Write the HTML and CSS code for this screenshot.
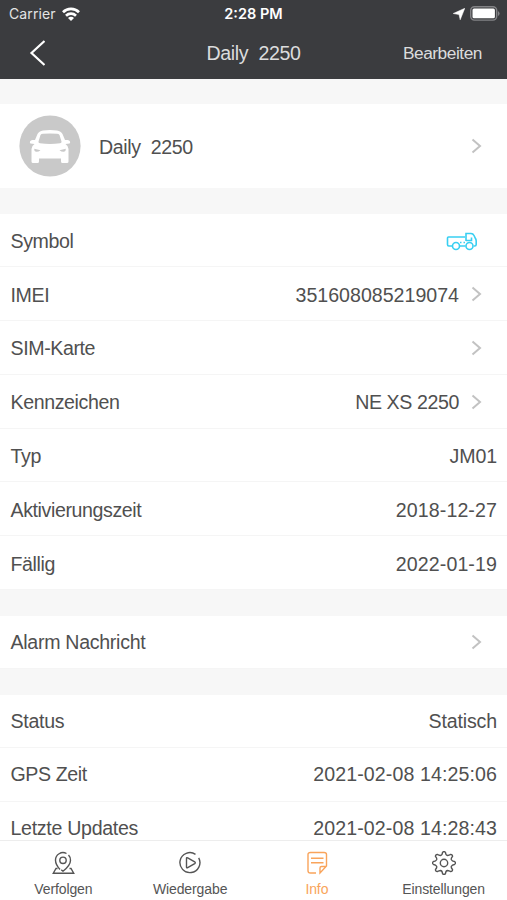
FILE: index.html
```html
<!DOCTYPE html>
<html lang="de">
<head>
    <meta charset="UTF-8">
    <meta name="viewport" content="width=device-width, initial-scale=1.0">
    <title>Daily 2250</title>
    <link rel="stylesheet" href="styles.css">
</head>
<body>
    <svg width="0" height="0" class="defs">
        <symbol id="chevron" viewBox="0 0 11 16">
            <path d="M1.500 1.500 9 8l-7.500 6.500" fill="none" stroke="#c2c2c2" stroke-width="2"/>
        </symbol>
    </svg>

    <header class="header">
        <div class="status-bar">
            <div class="carrier">
                <span>Carrier</span>
                <svg width="18" height="14" viewBox="0 0 18 14" fill="none" stroke="#fff" stroke-width="2.700">
                    <path d="M1 5.200a11.400 11.400 0 0 1 16 0M4 8.700a7.200 7.200 0 0 1 10 0"/>
                    <path d="M9 14 6 11a4.200 4.200 0 0 1 6 0z" fill="#fff" stroke="none"/>
                </svg>
            </div>
            <span class="time">2:28 PM</span>
            <div class="indicators">
                <svg width="12" height="12" viewBox="0 0 12 12"><path d="M11.800.3 7.200 11.800 6 6.600.2 5.500z" fill="#fff" stroke="#fff" stroke-width=".5"/></svg>
                <svg width="30" height="15" viewBox="0 0 30 15">
                    <rect x=".7" y=".7" width="26" height="13.400" rx="3.800" fill="none" stroke="#838386" stroke-width="1.400"/>
                    <rect x="2.500" y="2.500" width="22.400" height="9.800" rx="1.500" fill="#fff"/>
                    <path d="M28 5v5q1.600-1 1.600-2.500T28 5z" fill="#838386"/>
                </svg>
            </div>
        </div>
        <div class="nav-bar">
            <svg class="back" width="18" height="28" viewBox="0 0 18 28"><path d="M17.500 2 4.500 14l13 12" fill="none" stroke="#fff" stroke-width="2.200"/></svg>
            <h1>Daily&nbsp; 2250</h1>
            <span class="edit">Bearbeiten</span>
        </div>
    </header>

    <main>
        <section class="device">
            <svg class="avatar" width="62" height="62" viewBox="0 0 62 62">
                <circle cx="31" cy="31" r="30.600" fill="#c9c9c9"/>
                <path d="M15.500 29 11.500 28.500Q10.500 28 11 26.500 11.500 25 13.500 25H16L18.500 19Q20 16 24 15.500 31 14.500 38 15.500 42 16 43.500 19L46 25H48.500Q50.500 25 51 26.500 51.500 28 50.500 28.500L46.500 29Q49.500 31 49.500 34V46.500Q49.500 48 48 48H43.500Q42 48 42 46.500V43.500H20V46.500Q20 48 18.500 48H14Q12.500 48 12.500 46.500V34Q12.500 31 15.500 29z" fill="#fff"/>
                <path d="M21.500 20Q22.300 18.900 24 18.800 31 18.200 38 18.800 39.700 18.900 40.500 20L42.500 26.500Q42.800 28 41 28.300 31 29.500 21 28.300 19.200 28 19.500 26.500z" fill="#c9c9c9"/>
                <path d="M15.200 33.700 21.500 35.300Q19.500 37 17 36.800 15 36.500 15.200 33.700zM46.800 33.700 40.500 35.300Q42.500 37 45 36.800 47 36.500 46.800 33.700z" fill="#c9c9c9"/>
            </svg>
            <span class="label">Daily&nbsp; 2250</span>
            <svg class="chevron"><use href="#chevron"/></svg>
        </section>

        <section class="list info">
            <div class="row">
                <span class="label">Symbol</span>
                <svg class="truck" width="32" height="19" viewBox="0 0 32 19" fill="none" stroke="#38cff2" stroke-width="1.600">
                    <path d="M6 14H2.800Q1.500 14 1.500 12.500V6Q1.500 5 2.500 5H19M13.500 14h6M14 10.500h1.500m2 0H19M20 9V1.500h5q2 0 3 2l1.500 3q.7 1.200.7 2.500v3.500q0 1.500-1.500 1.500h-1M20 8.500h5.500v-3"/>
                    <circle cx="10" cy="14" r="3.500"/>
                    <circle cx="23.500" cy="14" r="3.500"/>
                </svg>
            </div>
            <div class="row">
                <span class="label">IMEI</span>
                <span class="value imei">351608085219074</span>
                <svg class="chevron"><use href="#chevron"/></svg>
            </div>
            <div class="row">
                <span class="label">SIM-Karte</span>
                <svg class="chevron"><use href="#chevron"/></svg>
            </div>
            <div class="row">
                <span class="label">Kennzeichen</span>
                <span class="value plate">NE XS 2250</span>
                <svg class="chevron"><use href="#chevron"/></svg>
            </div>
            <div class="row">
                <span class="label">Typ</span>
                <span class="value model">JM01</span>
            </div>
            <div class="row">
                <span class="label">Aktivierungszeit</span>
                <span class="value">2018-12-27</span>
            </div>
            <div class="row">
                <span class="label">Fällig</span>
                <span class="value">2022-01-19</span>
            </div>
        </section>

        <section class="list">
            <div class="row">
                <span class="label wide">Alarm Nachricht</span>
                <svg class="chevron"><use href="#chevron"/></svg>
            </div>
        </section>

        <section class="list status">
            <div class="row">
                <span class="label wide">Status</span>
                <span class="value state">Statisch</span>
            </div>
            <div class="row">
                <span class="label">GPS Zeit</span>
                <span class="value">2021-02-08 14:25:06</span>
            </div>
            <div class="row">
                <span class="label wide">Letzte Updates</span>
                <span class="value">2021-02-08 14:28:43</span>
            </div>
        </section>
    </main>

    <nav class="tab-bar">
        <a class="tab">
            <svg width="24" height="24" viewBox="0 0 24 24">
                <path d="M9 18.500Q4.500 13.500 4.500 9.200a7.500 7.500 0 0 1 11-6.700M17.500 4q2 2 2 5.200 0 5-7.500 11-1-.8-1.700-1.500M6.500 17.500h-1.500l-2.700 4.700h20.400l-2.700-4.700h-1.500"/>
                <circle cx="12" cy="9.300" r="3.200"/>
            </svg>
            <span>Verfolgen</span>
        </a>
        <a class="tab">
            <svg width="24" height="24" viewBox="0 0 24 24">
                <path d="M17.500 3.300a10 10 0 1 0 3.200 3.500M8.500 16V7.500q0-1.300 1.200-.7l7 4q1.200.9 0 1.800l-7 4Q8.500 17.400 8.500 16z"/>
            </svg>
            <span>Wiedergabe</span>
        </a>
        <a class="tab active">
            <svg width="24" height="24" viewBox="0 0 24 24">
                <path d="M11 22H5.500q-2.500 0-2.500-2.500v-16Q3 1.500 5.500 1.500h13.500q2.500 0 2.500 2V15l-6.500 7V17q0-1.500 1.500-1.500h5M6 7.300h12.500M6 11.800h12.500"/>
            </svg>
            <span>Info</span>
        </a>
        <a class="tab">
            <svg width="24" height="24" viewBox="0 0 24 24">
                <path d="M10.500 1.500Q12-.5 13.500 1.500 13.700 4.300 15.500 4.500 17.300 4.300 18.400 3.500 20.700 3.300 20.500 5.600 18.800 7.400 19.400 8.700 20.200 10.300 22.500 10.500 24.500 12 22.500 13.500 20.200 13.700 19.400 15.300 18.800 16.600 20.500 18.400 20.700 20.700 18.400 20.500 17.300 19.700 15.500 19.500 13.700 19.700 13.500 22.500 12 24.500 10.500 22.500 10.300 19.700 8.500 19.500 6.700 19.700 5.600 20.500 3.300 20.700 3.500 18.400 5.200 16.600 4.600 15.300 3.800 13.700 1.500 13.500-.5 12 1.500 10.500 3.800 10.300 4.600 8.700 5.200 7.400 3.500 5.600 3.300 3.300 5.600 3.500 6.700 4.300 8.500 4.500 10.300 4.300 10.500 1.500z" stroke-linejoin="round"/>
                <circle cx="12" cy="12" r="3.700"/>
            </svg>
            <span>Einstellungen</span>
        </a>
    </nav>
</body>
</html>
```
FILE: styles.css
```css
* { box-sizing: border-box; }
body { height: 900px; margin: 0; display: flex; flex-direction: column; overflow: hidden; background: #f7f7f7; color: #505050; font-family: "Liberation Sans", Arial, sans-serif; font-size: 19.6px; }
svg { display: block; flex: none; }
.defs { position: absolute; }

.header { flex: none; height: 79px; background: #3b3c3f; color: #fff; }
.status-bar { display: grid; grid-template-columns: 1fr auto 1fr; align-items: center; height: 27px; padding: 0 7px 0 9px; font-family: Inter, sans-serif; font-size: 14px; }
.carrier { display: flex; align-items: center; gap: 6px; color: #e4e4e5; letter-spacing: 0.1px; }
.time { font-weight: 600; font-size: 14.5px; margin-right: 2px; }
.indicators { display: flex; align-items: center; justify-content: flex-end; gap: 5px; }
.nav-bar { display: grid; grid-template-columns: 1fr auto 1fr; align-items: center; height: 53px; padding: 0 25px 0 27px; color: #dcdcdd; }
.nav-bar h1 { margin: 0 2px 0 0; font-size: 19.6px; font-weight: normal; letter-spacing: -0.35px; }
.edit { justify-self: end; font-size: 17.3px; letter-spacing: -0.45px; }
.back { margin-top: -2px; }

main { flex: 1; min-height: 0; overflow: hidden; padding-top: 25px; }
.device { display: flex; align-items: center; height: 84px; padding: 0 25px 0 19px; background: #fff; }
.device .label { margin-left: 18px; padding-top: 2px; }
.list { margin-top: 25.500px; background: #fff; }
.row { display: flex; align-items: center; height: 53.700px; padding: 2px 10px 0 10.500px; border-bottom: 1px solid #f5f5f5; }
.info .row { height: 53.800px; padding-top: 3px; }
.status .row { padding-top: 0; }
.label { letter-spacing: -0.4px; margin-right: auto; }
.label.wide { letter-spacing: -0.3px; }
.value { letter-spacing: 0.1px; }
.imei { letter-spacing: 0; }
.plate { letter-spacing: -0.4px; }
.model { letter-spacing: -0.1px; }
.state { letter-spacing: -0.15px; }
.chevron { width: 11px; height: 16px; margin: -2px 15px 0 12px; }
.device .chevron { margin: 0; }
.truck { margin-right: 19px; }

.tab-bar { flex: none; display: grid; grid-template-columns: repeat(4, 1fr); height: 60px; border-top: 1px solid #ededed; background: #fff; font-size: 14px; }
.tab { display: flex; flex-direction: column; align-items: center; padding-top: 10px; gap: 6px; color: #555; letter-spacing: -0.1px; }
.tab svg { fill: none; stroke: currentColor; stroke-width: 1.4; }
.tab.active { color: #f9a45b; }
```
